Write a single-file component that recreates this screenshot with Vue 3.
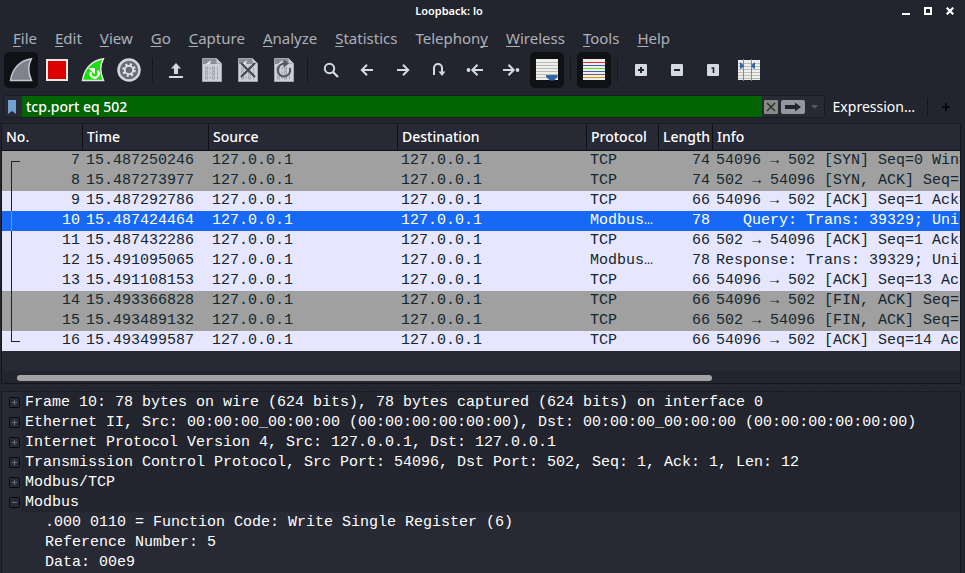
<script setup>
import { ref } from 'vue'

const menus = [
  ['', 'F', 'ile'], ['', 'E', 'dit'], ['', 'V', 'iew'], ['', 'G', 'o'],
  ['', 'C', 'apture'], ['', 'A', 'nalyze'], ['', 'S', 'tatistics'],
  ['Telephon', 'y', ''], ['', 'W', 'ireless'], ['', 'T', 'ools'], ['', 'H', 'elp'],
]

const tools = [
  { icon: 'fin', label: 'Start capture', on: true },
  { icon: 'stop', label: 'Stop capture' },
  { icon: 'restart', label: 'Restart capture' },
  { icon: 'gear', label: 'Capture options' },
  { icon: 'sep' },
  { icon: 'open', label: 'Open file' },
  { icon: 'save', label: 'Save file' },
  { icon: 'close', label: 'Close file' },
  { icon: 'reload', label: 'Reload file' },
  { icon: 'sep' },
  { icon: 'find', label: 'Find packet' },
  { icon: 'back', label: 'Previous packet' },
  { icon: 'next', label: 'Next packet' },
  { icon: 'goto', label: 'Go to packet' },
  { icon: 'first', label: 'First packet' },
  { icon: 'last', label: 'Last packet' },
  { icon: 'scroll', label: 'Auto scroll', on: true },
  { icon: 'sep' },
  { icon: 'color', label: 'Colorize', on: true },
  { icon: 'sep' },
  { icon: 'zoomin', label: 'Enlarge text' },
  { icon: 'zoomout', label: 'Shrink text' },
  { icon: 'zoomone', label: 'Normal size' },
  { icon: 'columns', label: 'Resize columns' },
]

const filter = ref('tcp.port eq 502')
const columns = ['No.', 'Time', 'Source', 'Destination', 'Protocol', 'Length', 'Info']

const packets = [
  [7, '15.487250246', 'TCP', 74, '54096 → 502 [SYN] Seq=0 Win=', 'gray'],
  [8, '15.487273977', 'TCP', 74, '502 → 54096 [SYN, ACK] Seq=', 'gray'],
  [9, '15.487292786', 'TCP', 66, '54096 → 502 [ACK] Seq=1 Ack=', 'pale'],
  [10, '15.487424464', 'Modbus…', 78, '   Query: Trans: 39329; Uni', 'selected'],
  [11, '15.487432286', 'TCP', 66, '502 → 54096 [ACK] Seq=1 Ack=', 'pale'],
  [12, '15.491095065', 'Modbus…', 78, 'Response: Trans: 39329; Uni', 'pale'],
  [13, '15.491108153', 'TCP', 66, '54096 → 502 [ACK] Seq=13 Ac', 'pale'],
  [14, '15.493366828', 'TCP', 66, '54096 → 502 [FIN, ACK] Seq=', 'gray'],
  [15, '15.493489132', 'TCP', 66, '502 → 54096 [FIN, ACK] Seq=', 'gray'],
  [16, '15.493499587', 'TCP', 66, '54096 → 502 [ACK] Seq=14 Ac', 'pale'],
]

const nodes = ref([
  { text: 'Frame 10: 78 bytes on wire (624 bits), 78 bytes captured (624 bits) on interface 0' },
  { text: 'Ethernet II, Src: 00:00:00_00:00:00 (00:00:00:00:00:00), Dst: 00:00:00_00:00:00 (00:00:00:00:00:00)' },
  { text: 'Internet Protocol Version 4, Src: 127.0.0.1, Dst: 127.0.0.1' },
  { text: 'Transmission Control Protocol, Src Port: 54096, Dst Port: 502, Seq: 1, Ack: 1, Len: 12' },
  { text: 'Modbus/TCP' },
  {
    text: 'Modbus',
    open: true,
    fields: ['.000 0110 = Function Code: Write Single Register (6)', 'Reference Number: 5', 'Data: 00e9'],
  },
])
</script>

<template>
  <div class="window">
    <header class="titlebar">
      <h1>Loopback: lo</h1>
      <div class="controls">
        <button aria-label="Minimize"><svg width="8" height="8"><path d="M0 6h8v2H0z" fill="#fff" /></svg></button>
        <button aria-label="Maximize"><svg width="8" height="8"><path d="M1 1h6v6H1z" fill="none" stroke="#fff" stroke-width="2" /></svg></button>
        <button aria-label="Close"><svg width="8" height="8"><path d="M.7.7l6.600 6.600M7.300.7L.7 7.300" stroke="#fff" stroke-width="2.200" /></svg></button>
      </div>
    </header>

    <nav class="menubar">
      <button v-for="m in menus" :key="m.join('')">{{ m[0] }}<u>{{ m[1] }}</u>{{ m[2] }}</button>
    </nav>

    <div class="toolbar">
      <template v-for="(t, i) in tools" :key="i">
        <span v-if="t.icon === 'sep'" class="sep"></span>
        <button v-else :aria-label="t.label" :class="{ on: t.on }">
          <svg width="24" height="24" viewBox="0 0 24 24" fill="none">
            <path v-if="t.icon === 'fin'" d="M1.500 22.500C3 12 10 2.500 22.300 .8C18.500 8 19.500 16 22.500 22.500Z" fill="#7f828c" stroke="#c4c7cf" stroke-width="1.500" />
            <path v-else-if="t.icon === 'stop'" d="M2 2h20v20H2z" fill="#dc0000" stroke="#edeae6" stroke-width="2" />
            <template v-else-if="t.icon === 'restart'">
              <path d="M1.500 22.500C3 12 10 2.500 22.300 .8C18.500 8 19.500 16 22.500 22.500Z" fill="#1bdf0a" stroke="#e6e2ea" stroke-width="1.500" />
              <path d="M16.500 12.800a4 4 0 1 1-6.500 1.200" stroke="#fff" stroke-width="2.200" />
              <path d="M7.500 10h6.500v6.500z" fill="#fff" />
            </template>
            <template v-else-if="t.icon === 'gear'">
              <circle cx="12" cy="12" r="10.500" fill="#686b74" stroke="#d2d5dd" stroke-width="2.500" />
              <circle cx="12" cy="12" r="5.600" stroke="#e0e3e9" stroke-width="2.400" stroke-dasharray="2.200 2.198" />
              <circle cx="12" cy="12" r="4.200" stroke="#e0e3e9" stroke-width="1.800" />
            </template>
            <path v-else-if="t.icon === 'open'" d="M5 18h14v2H5zM12 5l5 5.500h-3v5.500h-4v-5.500H7z" fill="#d3d7e0" />
            <template v-else-if="['save', 'close', 'reload'].includes(t.icon)">
              <path d="M2.500.5h14l5 5v18h-19z" fill="#cdd0d9" stroke="#a5a8b0" />
              <path d="M3 1h13l5 5H3z" fill="#8b8e97" />
              <path d="M6 6l5-4-1 4z" fill="#e5e8ee" />
              <path d="M16.500.5v5h5z" fill="#c6c9d1" />
              <g stroke="#9a9da6" stroke-width=".9">
                <path v-for="y in [9, 13.500, 18]" :key="y" :d="`M5.500 ${y}h2v3h-2zM10 ${y}v3M12.500 ${y}h2v3h-2zM17.500 ${y}v3.500`" />
              </g>
              <path v-if="t.icon === 'close'" d="M5 5l14 14M19 5L5 19" stroke="#42454e" stroke-width="2" />
              <template v-if="t.icon === 'reload'">
                <path d="M17.900 10a6.300 6.300 0 1 1-5.500-4.200" stroke="#555861" stroke-width="2" />
                <path d="M11.500 1.500l5.500 4-5.500 4z" fill="#555861" />
              </template>
            </template>
            <template v-else-if="t.icon === 'find'">
              <circle cx="10.500" cy="10.500" r="4.700" stroke="#d3dae3" stroke-width="2" />
              <path d="M14 14l5 5" stroke="#d3dae3" stroke-width="2.300" />
            </template>
            <path v-else-if="t.icon === 'back'" d="M18 12H7.500M12 6.800L6.800 12l5.200 5.200" stroke="#d3dae3" stroke-width="2" />
            <path v-else-if="t.icon === 'next'" d="M6 12h10.500M12 6.800l5.200 5.200-5.200 5.200" stroke="#d3dae3" stroke-width="2" />
            <template v-else-if="t.icon === 'goto'">
              <path d="M7 17V10a4 4 0 0 1 8 0v5" stroke="#d3dae3" stroke-width="2" />
              <path d="M11.500 13.500h7l-3.500 4.500z" fill="#d3dae3" />
            </template>
            <template v-else-if="t.icon === 'first'">
              <path d="M20 12H10M14.500 6.800L9.300 12l5.200 5.200" stroke="#d3dae3" stroke-width="2" />
              <circle cx="5.500" cy="12" r="1.900" fill="#d3dae3" />
            </template>
            <template v-else-if="t.icon === 'last'">
              <path d="M4 12h10M9.500 6.800l5.200 5.200-5.200 5.200" stroke="#d3dae3" stroke-width="2" />
              <circle cx="18.500" cy="12" r="1.900" fill="#d3dae3" />
            </template>
            <template v-else-if="t.icon === 'scroll'">
              <path d="M1 1h22v21H1z" fill="#eeeeec" />
              <path d="M1 4.500h22M1 7.500h22M1 10.500h22M1 13.500h22M1 16.500h22M1 19.500h22" stroke="#babdb6" />
              <path d="M11 17h11.500v2l-3.500 3.500h-4L11 19z" fill="#3465a4" />
            </template>
            <template v-else-if="t.icon === 'color'">
              <path d="M1 1h22v21H1z" fill="#eeeeec" />
              <path d="M1 4.500h22" stroke="#ef2929" />
              <path d="M1 7.500h22M1 13.500h22" stroke="#3465a4" />
              <path d="M1 10.500h22" stroke="#73d216" />
              <path d="M1 16.500h22" stroke="#75507b" />
              <path d="M1 19.500h22" stroke="#c4a000" />
            </template>
            <template v-else-if="t.icon === 'columns'">
              <path d="M1 2h22v20H1z" fill="#eeeeec" />
              <path d="M1 5.500h22M1 8.500h22M1 11.500h22M1 14.500h22M1 17.500h22M1 20.500h22" stroke="#babdb6" />
              <path d="M6.500 1v22M14.500 1v22" stroke="#888a85" />
              <path d="M3 4l3.500 3v2L3 11zM18 4l-3.500 3v2l3.500 2z" fill="#3465a4" />
            </template>
            <template v-else>
              <rect x="6" y="6" width="12" height="12" rx="1" fill="#d3dae3" />
              <path v-if="t.icon === 'zoomin'" d="M9 12h6M12 9v6" stroke="#23252e" stroke-width="2" />
              <path v-else-if="t.icon === 'zoomout'" d="M9 12h6" stroke="#23252e" stroke-width="2" />
              <path v-else d="M10.500 10h2v5" stroke="#23252e" stroke-width="1.600" />
            </template>
          </svg>
        </button>
      </template>
    </div>

    <form class="filterbar" @submit.prevent>
      <div class="field">
        <button class="mark" type="button" aria-label="Bookmarks">
          <svg width="8" height="14"><path d="M0 0h8v14l-4-3-4 3z" fill="#729fcf" /></svg>
        </button>
        <input v-model="filter" type="text" aria-label="Display filter" spellcheck="false" />
        <button class="clear" type="button" aria-label="Clear">
          <svg width="14" height="14"><rect width="14" height="14" rx="1" fill="#888a85" /><path d="M3 3l8 8M11 3l-8 8" stroke="#2c2f34" stroke-width="1.500" /></svg>
        </button>
        <button class="apply" type="submit" aria-label="Apply">
          <svg width="24" height="14"><rect width="24" height="14" rx="2" fill="#9496a0" /><path d="M4 5h10V2.500l6 4.500-6 4.500V9H4z" fill="#23252e" /></svg>
        </button>
        <button class="recent" type="button" aria-label="Recent filters">
          <svg width="7" height="4"><path d="M0 0h7L3.500 4z" fill="#555753" /></svg>
        </button>
      </div>
      <button class="expression" type="button">Expression…</button>
      <span class="divider"></span>
      <button class="add" type="button" aria-label="Add filter button">
        <svg width="8" height="8"><path d="M4 0v8M0 4h8" stroke="#08090c" stroke-width="2" /></svg>
      </button>
    </form>

    <section class="packets">
      <table>
        <colgroup>
          <col class="c-no" /><col class="c-time" /><col class="c-addr" /><col class="c-addr" /><col class="c-proto" /><col class="c-len" /><col />
        </colgroup>
        <thead>
          <tr><th v-for="c in columns" :key="c">{{ c }}</th></tr>
        </thead>
        <tbody>
          <tr v-for="p in packets" :key="p[0]" :class="p[5]">
            <td class="num trace">{{ p[0] }}</td>
            <td>{{ p[1] }}</td>
            <td>127.0.0.1</td>
            <td>127.0.0.1</td>
            <td>{{ p[2] }}</td>
            <td class="num">{{ p[3] }}</td>
            <td>{{ p[4] }}</td>
          </tr>
        </tbody>
      </table>
      <div class="scrollbar"><div class="thumb"></div></div>
    </section>

    <div class="splitter"></div>

    <section class="details">
      <div v-for="n in nodes" :key="n.text">
        <div class="node">
          <button :aria-label="n.open ? 'Collapse' : 'Expand'" @click="n.open = !n.open">
            <svg width="11" height="11" fill="none">
              <rect x=".5" y=".5" width="10" height="10" rx="1" stroke="#08090c" />
              <path :d="n.open ? 'M3 5.500h5' : 'M3 5.500h5M5.500 3v5'" stroke="#6a6d76" />
            </svg>
          </button>
          <span>{{ n.text }}</span>
        </div>
        <template v-if="n.open">
          <div v-for="f in n.fields" :key="f" class="leaf">{{ f }}</div>
        </template>
      </div>
    </section>
  </div>
</template>

<style>
body {
  background: #23252e;
}
</style>

<style scoped>
.window {
  display: flex;
  flex-direction: column;
  height: 100vh;
  overflow: hidden;
  background: #23252e;
  color: #fff;
  font: 14px/20px "Noto Sans", sans-serif;
}
button {
  display: flex;
  align-items: center;
  justify-content: center;
  flex: none;
  padding: 0;
  border: 0;
  background: none;
  color: inherit;
  font: inherit;
}
.titlebar {
  display: flex;
  align-items: center;
  height: 22px;
}
h1 {
  flex: 1;
  margin: 0;
  text-align: center;
  font-size: 11px;
  font-weight: 600;
}
.controls {
  display: flex;
  gap: 14px;
  padding: 0 11px 0 4px;
}
.menubar {
  display: flex;
  gap: 18px;
  padding: 6px 13px 4px;
  color: #adb0b8;
  font-size: 15px;
}
.menubar button {
  display: block;
}
u {
  text-decoration-thickness: 1px;
  text-underline-offset: 2px;
  text-decoration-skip-ink: none;
}
.toolbar {
  display: flex;
  gap: 2px;
  padding: 0 4px;
}
.toolbar button {
  width: 34px;
  height: 36px;
  border-radius: 5px;
}
.toolbar .on {
  background: #101115;
}
.sep {
  display: flex;
  justify-content: center;
  width: 9px;
  padding: 6px 0;
}
.sep::before {
  content: "";
  width: 1px;
  background: #15161b;
}
.filterbar {
  display: flex;
  align-items: center;
  padding: 7px 15px 5px 3px;
}
.field {
  display: flex;
  flex: 1;
  height: 21px;
  border: 1px solid #1a1b22;
  border-radius: 3px;
  background: #272935;
}
.mark {
  width: 18px;
  padding-right: 2px;
}
input {
  flex: 1;
  min-width: 0;
  padding: 0 4px;
  border: 0;
  outline: 0;
  background: #006400;
  color: #fff;
  font: inherit;
  font-weight: 500;
}
.clear {
  width: 18px;
}
.apply {
  width: 26px;
}
.recent {
  width: 18px;
}
.expression {
  margin-left: 8px;
}
.divider {
  width: 1px;
  height: 18px;
  margin: 0 14px 0 12px;
  background: #15161b;
}
.packets {
  margin: 0 4px 0 1px;
  border: 1px solid #15161b;
  border-top-color: #1a1b22;
  background: #272935;
}
table {
  width: 100%;
  table-layout: fixed;
  border-collapse: separate;
  border-spacing: 0;
}
.c-no {
  width: 81px;
}
.c-time {
  width: 126px;
}
.c-addr {
  width: 189px;
}
.c-proto {
  width: 72px;
}
.c-len {
  width: 54px;
}
th {
  box-sizing: border-box;
  height: 27px;
  padding: 0 4px;
  border-right: 1px solid #0f1014;
  border-bottom: 1px solid #0f1014;
  text-align: left;
  font-weight: 500;
}
th:last-child {
  border-right: 0;
}
td {
  position: relative;
  height: 20px;
  padding: 0 3px;
  overflow: hidden;
  white-space: pre;
  font: 15px/20px "Liberation Mono", monospace;
}
.num {
  text-align: right;
}
.gray {
  background: #a0a0a0;
  color: #12272e;
}
.pale {
  background: #e7e6ff;
  color: #12272e;
}
.selected {
  background: #1668f5;
  color: #fff;
}
.trace::before {
  content: "";
  position: absolute;
  top: 0;
  bottom: 0;
  left: 9px;
  width: 8px;
  border-left: 1px solid #12272e;
}
.selected .trace::before {
  border-color: #8a8f99;
}
tr:first-child .trace::before {
  top: 10px;
  border-top: 1px solid #12272e;
}
tr:last-child .trace::before {
  bottom: 9px;
  border-bottom: 1px solid #12272e;
}
.scrollbar {
  margin-top: 20px;
  padding: 4px 17px 2px 15px;
  background: #23252e;
}
.thumb {
  width: 75%;
  height: 6px;
  border-radius: 3px;
  background: #a3a3a5;
}
.splitter {
  height: 7px;
  background: repeating-linear-gradient(45deg, #272934 0 1px, #23252e 1px 3px);
}
.details {
  flex: 1;
  min-height: 0;
  overflow: hidden;
  margin: 0 4px 0 1px;
  border: 1px solid #1a1b22;
  border-bottom: 0;
  background: #272935;
  font: 15px/22px "Liberation Mono", monospace;
}
.node {
  display: flex;
  height: 20px;
}
.node button {
  width: 20px;
  padding: 1px 0 0 5px;
}
.node span {
  flex: 1;
  padding-left: 3px;
  background: #23252e;
  white-space: pre;
}
.leaf {
  height: 20px;
  padding-left: 43px;
  white-space: pre;
}
</style>
